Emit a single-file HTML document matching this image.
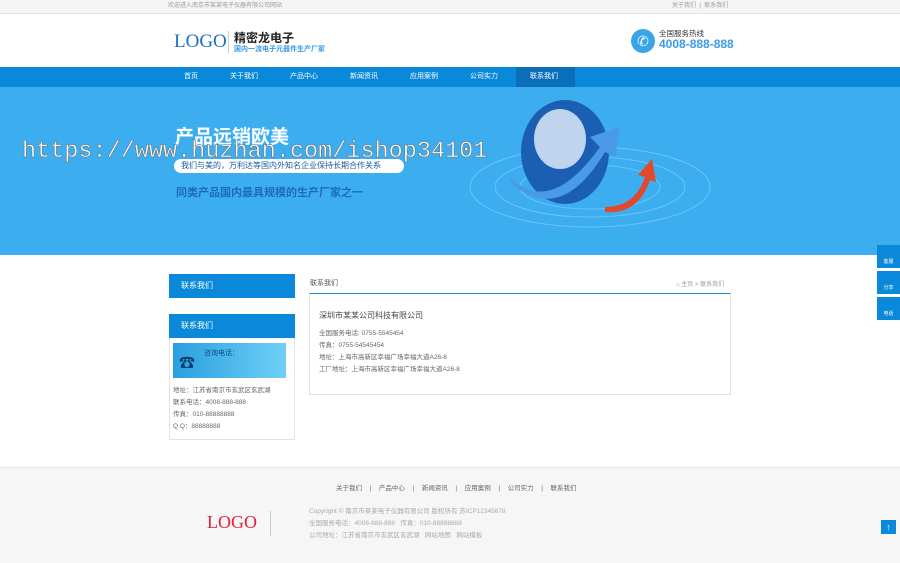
<!DOCTYPE html><html><head><meta charset="utf-8"><style>
*{margin:0;padding:0;box-sizing:border-box}
body{width:900px;height:563px;overflow:hidden;font-family:"Liberation Sans","Noto Sans CJK SC",sans-serif;background:#fff;position:relative;color:#555}
.a{position:absolute}
.top{left:0;top:0;width:900px;height:14px;background:#f5f5f5;border-bottom:1px solid #e5e5e5;font-size:6px;color:#999;line-height:13px}
.nav{left:0;top:67px;width:900px;height:20px;background:#0a88da}
.nav span{position:absolute;top:0;font-size:7px;color:#fff;line-height:20px}
.banner{left:0;top:87px;width:900px;height:168px;background:#3caef0;overflow:hidden}
.side{left:169px;width:126px;background:#0a88da;color:#fff;font-size:8px;line-height:24px;padding-left:12px}
.box{border:1px solid #e3e3e3}
.t7{font-size:6.5px;color:#666}
</style></head><body>
<div class="a top"><span class="a" style="left:168px">欢迎进入南京市某某电子仪器有限公司网站</span><span class="a" style="left:672px">关于我们 &nbsp;|&nbsp; 联系我们</span></div>
<div class="a" style="left:174px;top:31px;font-family:'Liberation Serif',serif;font-size:19px;color:#1a6fc4">LOGO</div>
<div class="a" style="left:228px;top:31px;width:1px;height:22px;background:#ccc"></div>
<div class="a" style="left:234px;top:29px;font-size:12px;font-weight:bold;color:#222">精密龙电子</div>
<div class="a" style="left:234px;top:44px;font-size:7px;color:#3a9be8;font-weight:bold">国内一流电子元器件生产厂家</div>
<div class="a" style="left:631px;top:29px;width:24px;height:24px;border-radius:50%;background:#3aa4ea;color:#fff;font-size:14px;text-align:center;line-height:24px">✆</div>
<div class="a" style="left:659px;top:28px;font-size:7.5px;color:#333">全国服务热线</div>
<div class="a" style="left:659px;top:37px;font-size:12px;font-weight:bold;color:#3a9be8">4008-888-888</div>
<div class="a nav"><span style="left:184px">首页</span><span style="left:230px">关于我们</span><span style="left:290px">产品中心</span><span style="left:350px">新闻资讯</span><span style="left:410px">应用案例</span><span style="left:470px">公司实力</span><div class="a" style="left:516px;top:0;width:59px;height:20px;background:#0a6fb8"></div><span style="left:530px">联系我们</span></div>
<div class="a banner">
<svg class="a" style="left:420px;top:0" width="360" height="168"><g fill="none" stroke="#8fd2fa" stroke-width="1" opacity=".6"><ellipse cx="170" cy="100" rx="120" ry="40"/><ellipse cx="170" cy="100" rx="95" ry="30"/><ellipse cx="170" cy="100" rx="70" ry="22"/></g><ellipse cx="145" cy="65" rx="44" ry="52" fill="#1b5fb3"/><ellipse cx="140" cy="52" rx="26" ry="30" fill="#e8f1fb" opacity=".8"/><path d="M90 90 Q130 130 180 60 L170 50 L200 40 L195 70 L185 65 Q140 140 90 95Z" fill="#4a9ae8"/><path d="M185 120 Q215 120 225 90 L218 88 L232 72 L236 95 L230 93 Q218 128 185 125Z" fill="#e04a2a"/></svg>
<div class="a" style="left:175px;top:35px;font-size:19px;font-weight:bold;color:#fff">产品远销欧美</div>
<div class="a" style="left:174px;top:72px;width:230px;height:14px;border-radius:7px;background:#fff"></div>
<div class="a" style="left:181px;top:73px;font-size:8px;color:#1a5aa0">我们与美的，万利达等国内外知名企业保持长期合作关系</div>
<div class="a" style="left:176px;top:97px;font-size:11px;font-weight:bold;color:#1d6bb8">同类产品国内最具规模的生产厂家之一</div>
<div class="a" style="left:22px;top:51px;font-family:'Liberation Mono',monospace;font-size:23.5px;color:#fff;-webkit-text-stroke:.5px #666">https://www.huzhan.com/ishop34101</div>
</div>
<div class="a side" style="top:274px;height:24px">联系我们</div>
<div class="a side" style="top:314px;height:24px">联系我们</div>
<div class="a box" style="left:169px;top:338px;width:126px;height:102px;border-top:none"></div>
<div class="a" style="left:173px;top:343px;width:113px;height:35px;background:linear-gradient(90deg,#2a9fdf,#6fd0f7)"></div>
<div class="a" style="left:179px;top:349px;font-size:16px;color:#0a3d6a">☎</div>
<div class="a" style="left:204px;top:348px;font-size:7px;color:#0a4f8a">咨询电话：</div>
<div class="a t7" style="left:173px;top:385px;line-height:12px">地址：江苏省南京市玄武区玄武湖<br>联系电话：4008-888-888<br>传真：010-88888888<br>Q Q：88888888</div>
<div class="a" style="left:310px;top:278px;font-size:7px;color:#555">联系我们</div>
<div class="a" style="left:676px;top:279px;font-size:6px;color:#999">⌂ 主页 &gt; 联系我们</div>
<div class="a box" style="left:309px;top:293px;width:422px;height:102px;border-top:1.5px solid #1a8ad8"></div>
<div class="a" style="left:319px;top:310px;font-size:8px;color:#444">深圳市某某公司科技有限公司</div>
<div class="a t7" style="left:319px;top:328px;line-height:12px">全国服务电话: 0755-5545454<br>传真：0755-54545454<br>地址：上海市高新区幸福广场幸福大道A26-8<br>工厂地址：上海市高新区幸福广场幸福大道A26-8</div>
<div class="a" style="left:0;top:467px;width:900px;height:96px;background:#f6f6f6;border-top:1px solid #e8e8e8"></div>
<div class="a" style="left:336px;top:482px;font-size:6.5px;color:#666;word-spacing:2px">关于我们 &nbsp;| &nbsp;产品中心 &nbsp;| &nbsp;新闻资讯 &nbsp;| &nbsp;应用案例 &nbsp;| &nbsp;公司实力 &nbsp;| &nbsp;联系我们</div>
<div class="a" style="left:207px;top:512px;font-family:'Liberation Serif',serif;font-size:18px;color:#e0203a">LOGO</div>
<div class="a" style="left:270px;top:511px;width:1px;height:25px;background:#ccc"></div>
<div class="a" style="left:309px;top:506px;font-size:6.5px;color:#aaa;line-height:12px">Copyright © 南京市某某电子仪器有限公司 版权所有 苏ICP12345678<br>全国服务电话：4008-888-888 &nbsp; 传真：010-88888888<br>公司地址：江苏省南京市玄武区玄武湖 &nbsp; 网站地图 &nbsp; 网站模板</div>
<div class="a" style="left:877px;top:245px;width:23px;height:23px;background:#0a88da;color:#fff;font-size:5px;text-align:center;padding-top:13px">客服</div>
<div class="a" style="left:877px;top:271px;width:23px;height:23px;background:#0a88da;color:#fff;font-size:5px;text-align:center;padding-top:13px">分享</div>
<div class="a" style="left:877px;top:297px;width:23px;height:23px;background:#0a88da;color:#fff;font-size:5px;text-align:center;padding-top:13px">电话</div>
<div class="a" style="left:881px;top:520px;width:15px;height:14px;background:#0a88da;color:#fff;font-size:9px;text-align:center;line-height:14px">↑</div>
</body></html>
